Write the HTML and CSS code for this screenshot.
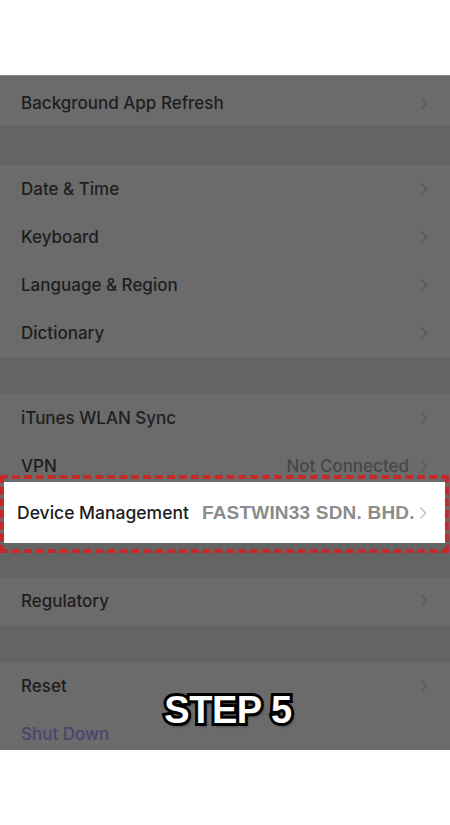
FILE: index.html
```html
<!DOCTYPE html>
<html lang="en">
<head>
    <meta charset="UTF-8">
    <meta name="viewport" content="width=device-width, initial-scale=1.0">
    <title>Step 5 - Device Management</title>
    <link rel="stylesheet" href="styles.css">
</head>
<body>
    <div class="shot">
        <!-- Background refresh -->
        <div class="group">
            <div class="row row-first">
                <span class="label">Background App Refresh</span>
                <svg class="chev" viewBox="0 0 8 14"><polyline points="1.5,1.5 6.5,7 1.5,12.5"/></svg>
            </div>
        </div>

        <div class="group g2">
            <div class="row">
                <span class="label">Date &amp; Time</span>
                <svg class="chev" viewBox="0 0 8 14"><polyline points="1.5,1.5 6.5,7 1.5,12.5"/></svg>
            </div>
            <div class="row">
                <span class="label">Keyboard</span>
                <svg class="chev" viewBox="0 0 8 14"><polyline points="1.5,1.5 6.5,7 1.5,12.5"/></svg>
            </div>
            <div class="row">
                <span class="label">Language &amp; Region</span>
                <svg class="chev" viewBox="0 0 8 14"><polyline points="1.5,1.5 6.5,7 1.5,12.5"/></svg>
            </div>
            <div class="row">
                <span class="label">Dictionary</span>
                <svg class="chev" viewBox="0 0 8 14"><polyline points="1.5,1.5 6.5,7 1.5,12.5"/></svg>
            </div>
        </div>

        <div class="group g3">
            <div class="row">
                <span class="label">iTunes WLAN Sync</span>
                <svg class="chev" viewBox="0 0 8 14"><polyline points="1.5,1.5 6.5,7 1.5,12.5"/></svg>
            </div>
            <div class="row">
                <span class="label">VPN</span>
                <span class="value">Not Connected</span>
                <svg class="chev" viewBox="0 0 8 14"><polyline points="1.5,1.5 6.5,7 1.5,12.5"/></svg>
            </div>
            <!-- covered by the highlight below -->
            <div class="row row-covered"></div>
        </div>

        <div class="group g4">
            <div class="row">
                <span class="label">Regulatory</span>
                <svg class="chev" viewBox="0 0 8 14"><polyline points="1.5,1.5 6.5,7 1.5,12.5"/></svg>
            </div>
        </div>

        <div class="group g5">
            <div class="row">
                <span class="label">Reset</span>
                <svg class="chev" viewBox="0 0 8 14"><polyline points="1.5,1.5 6.5,7 1.5,12.5"/></svg>
            </div>
            <div class="row">
                <span class="label link">Shut Down</span>
            </div>
        </div>

        <!-- highlighted row -->
        <div class="highlight">
            <div class="highlight-row">
                <span class="hl-label">Device Management</span>
                <span class="hl-value">FASTWIN33 SDN. BHD.</span>
                <svg class="chev hl-chev" viewBox="0 0 8 14"><polyline points="1.5,1.5 6.5,7 1.5,12.5"/></svg>
            </div>
        </div>

        <div class="step">STEP 5</div>
    </div>
</body>
</html>
```

FILE: styles.css
```css
body {
    margin: 0;
    padding: 0;
    background: #ffffff;
    font-family: Inter, "Liberation Sans", Arial, sans-serif;
}

.shot {
    position: relative;
    margin-top: 75px;
    height: 675px;
    overflow: hidden;
    background: #646464;
    border-top: 1px solid #8a8a8a;
    box-sizing: border-box;
}

.group {
    background: #6b6b6b;
}

.g2 {
    margin-top: 40px;
}

.g3 {
    margin-top: 37px;
}

.g4 {
    margin-top: 39px;
}

.g5 {
    margin-top: 37px;
}

.row {
    display: flex;
    align-items: center;
    height: 48px;
    padding: 0 22px 0 21px;
    color: #1e1e1e;
    font-size: 17px;
    font-weight: 500;
}

.row-first {
    height: 49px;
    padding-top: 4px;
    box-sizing: border-box;
}

.label {
    flex: 1;
}

.value {
    color: #474747;
    margin-right: 11px;
}

.link {
    color: #46466e;
}

.chev {
    width: 8px;
    height: 14px;
    fill: none;
    stroke: #5b5b5b;
    stroke-width: 1.6;
}

.highlight {
    position: absolute;
    left: 0;
    top: 399px;
    width: 449px;
    height: 78px;
    border: 4px dashed #c62a28;
    box-sizing: border-box;
    padding: 3px 0 6px 0;
}

.highlight-row {
    display: flex;
    align-items: center;
    height: 100%;
    background: #ffffff;
    padding: 0 18px 0 13px;
    font-size: 17.5px;
    font-weight: 500;
}

.hl-label {
    color: #1c1c1c;
    margin-right: 13px;
}

.hl-value {
    flex: 1;
    font-family: "Liberation Sans", Arial, sans-serif;
    font-weight: bold;
    font-size: 19px;
    letter-spacing: 0.2px;
    color: #8c8c8c;
}

.hl-chev {
    stroke: #c4c4c4;
}

.step {
    position: absolute;
    left: 0;
    right: 0;
    top: 613px;
    text-align: center;
    padding-left: 6px;
    font-family: "Liberation Sans", Arial, sans-serif;
    font-weight: bold;
    font-size: 38px;
    letter-spacing: -0.5px;
    color: #ffffff;
    -webkit-text-stroke: 6px #000000;
    paint-order: stroke fill;
    text-shadow: 2px 3px 3px rgba(0, 0, 0, 0.6);
}
```
